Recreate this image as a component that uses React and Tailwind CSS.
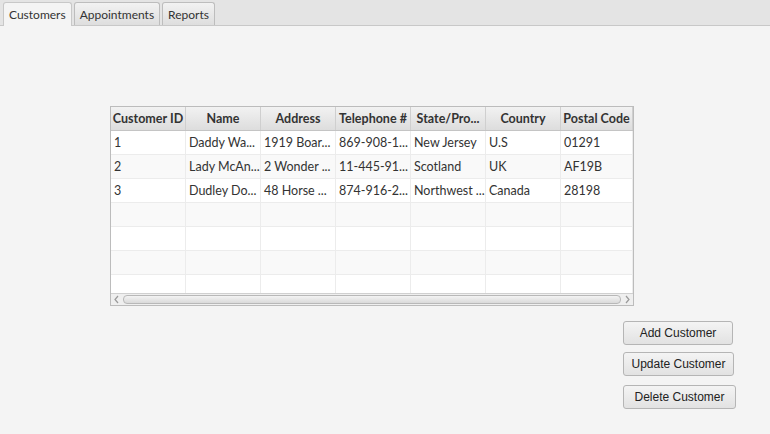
const columns = [
  { label: "Customer ID", w: "w-[75px]" },
  { label: "Name", w: "w-[75px]" },
  { label: "Address", w: "w-[75px]" },
  { label: "Telephone #", w: "w-[75px]" },
  { label: "State/Pro...", w: "w-[75px]" },
  { label: "Country", w: "w-[75px]" },
  { label: "Postal Code", w: "w-[72px]" },
];

const rows = [
  ["1", "Daddy Wa...", "1919 Boar...", "869-908-1...", "New Jersey", "U.S", "01291"],
  ["2", "Lady McAn...", "2 Wonder ...", "11-445-91...", "Scotland", "UK", "AF19B"],
  ["3", "Dudley Do...", "48 Horse ...", "874-916-2...", "Northwest ...", "Canada", "28198"],
  ["", "", "", "", "", "", ""],
  ["", "", "", "", "", "", ""],
  ["", "", "", "", "", "", ""],
  ["", "", "", "", "", "", ""],
];

const Tab = ({ label, active }) => (
  <div
    className={
      "px-[5px] pt-[1px] flex items-center border border-b-0 rounded-t-[3px] text-[12px] text-[#333] " +
      (active
        ? "bg-[#f4f4f4] border-[#c8c8c8] h-[24px] -mb-px"
        : "h-[23px] bg-gradient-to-b from-[#f2f2f2] to-[#dedede] border-[#bdbdbd]")
    }
  >
    {label}
  </div>
);

const Button = ({ children, className }) => (
  <button
    className={
      "h-[24px] rounded-[3px] border border-[#b5b5b5] bg-gradient-to-b from-[#f4f4f4] to-[#e2e2e2] text-[12px] text-[#222] " +
      className
    }
    style={{ fontFamily: '"Liberation Sans", Arial, sans-serif' }}
  >
    {children}
  </button>
);

const App = () => {
  return (
    <div
      className="w-[770px] h-[434px] bg-[#f4f4f4] overflow-hidden"
      style={{ fontFamily: 'Lato, "Noto Sans", sans-serif' }}
    >
      <div className="h-[26px] bg-[#e4e4e4] border-b border-[#c8c8c8] flex items-end gap-[2px] pl-[3px]">
        <Tab label="Customers" active />
        <Tab label="Appointments" />
        <Tab label="Reports" />
      </div>

      <div className="pl-[110px] pt-[80px]">
        <div className="w-[524px] h-[200px] border border-[#bcbcbc] bg-white flex flex-col overflow-hidden">
          <div className="flex h-[24px] bg-gradient-to-b from-[#f2f2f2] to-[#dddddd] border-b border-[#c4c4c4] shrink-0">
            {columns.map((c) => (
              <div
                key={c.label}
                className={
                  "shrink-0 border-r border-[#cfcfcf] flex items-center justify-center pt-[2px] text-[12.5px] font-bold text-[#333] whitespace-nowrap overflow-hidden " +
                  c.w
                }
              >
                {c.label}
              </div>
            ))}
          </div>
          <div className="flex-1 overflow-hidden">
            {rows.map((r, i) => (
              <div
                key={i}
                className={
                  "flex h-[24px] border-b border-[#ececec] " +
                  (i % 2 === 0 ? "bg-white" : "bg-[#f9f9f9]")
                }
              >
                {r.map((v, j) => (
                  <div
                    key={j}
                    className={
                      "shrink-0 border-r border-[#ececec] flex items-center pl-[3px] pt-[2px] text-[12.5px] text-[#333] whitespace-nowrap overflow-hidden " +
                      columns[j].w
                    }
                  >
                    {v}
                  </div>
                ))}
              </div>
            ))}
          </div>
          <div className="h-[12px] shrink-0 bg-[#efefef] border-t border-[#d0d0d0] flex items-center px-[2px] gap-[3px]">
            <svg width="7" height="9" viewBox="0 0 7 9" className="shrink-0">
              <path d="M5 1 L2 4.5 L5 8" fill="none" stroke="#9a9a9a" strokeWidth="1.2" />
            </svg>
            <div className="flex-1 h-[9px] rounded-[4px] border border-[#b8b8b8] bg-gradient-to-b from-[#f3f3f3] to-[#dadada]" />
            <svg width="7" height="9" viewBox="0 0 7 9" className="shrink-0">
              <path d="M2 1 L5 4.5 L2 8" fill="none" stroke="#9a9a9a" strokeWidth="1.2" />
            </svg>
          </div>
        </div>
      </div>

      <div className="pl-[623px] pt-[15px] flex flex-col gap-[7px] items-start">
        <Button className="w-[110px]">Add Customer</Button>
        <Button className="w-[111px]">Update Customer</Button>
        <Button className="w-[113px] mt-[2px]">Delete Customer</Button>
      </div>
    </div>
  );
};

export default App;
